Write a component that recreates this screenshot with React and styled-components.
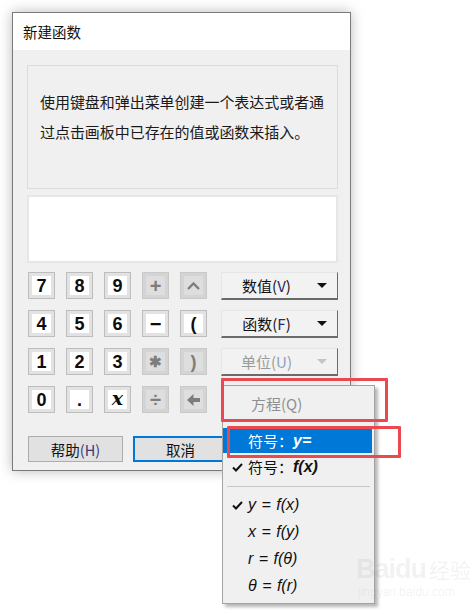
import React from "react";
import styled, { createGlobalStyle } from "styled-components";

const Global = createGlobalStyle`
  html, body {
    margin: 0;
    padding: 0;
    background: #ffffff;
  }
  body {
    font-family: "Noto Sans CJK SC", "Liberation Sans", sans-serif;
    color: #111;
  }
`;

const Page = styled.div`
  position: relative;
  width: 474px;
  height: 615px;
  box-sizing: border-box;
  padding: 12px 0 0 12px;
  overflow: hidden;
`;

const Window = styled.div`
  width: 339px;
  box-sizing: border-box;
  border: 1px solid #7a7a7a;
  box-shadow: 0 0 12px rgba(0, 0, 0, 0.28);
  background: #f0f0f0;
`;

const TitleBar = styled.div`
  height: 37px;
  background: #fff;
  display: flex;
  align-items: center;
  padding-left: 10px;
  font-size: 14.5px;
`;

const Body = styled.div`
  padding: 15px 12px 8px 14px;
  display: flex;
  flex-direction: column;
`;

const InfoBox = styled.div`
  height: 124px;
  box-sizing: border-box;
  border: 1px solid #dcdcdc;
  padding: 21px 8px 0 12px;
  font-size: 15px;
  line-height: 30px;
  letter-spacing: -0.05px;
  color: #1a1a1a;
`;

const InputBox = styled.div`
  margin-top: 6px;
  height: 68px;
  box-sizing: border-box;
  border: 2px solid #e6e6e6;
  background: #fff;
`;

const PadRow = styled.div`
  margin-top: 9px;
  display: flex;
  padding-left: 1px;
`;

const KeyGrid = styled.div`
  display: grid;
  grid-template-columns: repeat(5, 27px);
  grid-auto-rows: 27px;
  column-gap: 11px;
  row-gap: 11px;
`;

const Key = styled.div`
  box-sizing: border-box;
  border: 1px solid ${(p) => (p.$off ? "#c9c9c9" : "#bdbdbd")};
  background: ${(p) => (p.$off ? "#d4d4d4" : "#e2e2e2")};
  padding: 3px;
  display: flex;
`;

const KeyFace = styled.div`
  flex: 1;
  background: ${(p) => (p.$off ? "#dedede" : "#ffffff")};
  color: ${(p) => (p.$off ? "#7d7d7d" : "#0d0d0d")};
  display: flex;
  align-items: center;
  justify-content: center;
  font-family: "Liberation Sans", Arial, sans-serif;
  font-weight: bold;
  font-size: ${(p) => p.$size || 18}px;
  line-height: 1;
`;

const ScriptX = styled.span`
  font-family: "DejaVu Serif", "Liberation Serif", serif;
  font-style: italic;
  font-size: 19px;
  font-weight: bold;
  margin-top: -3px;
`;

const DropCol = styled.div`
  margin-left: 14px;
  display: flex;
  flex-direction: column;
  gap: 10px;
`;

const DropButton = styled.div`
  width: 117px;
  height: 28px;
  box-sizing: border-box;
  border-top: 1px solid #e6e6e6;
  border-left: 1px solid #e6e6e6;
  border-right: 1px solid #6a6a6a;
  border-bottom: 2px solid #6a6a6a;
  background: #f2f2f2;
  display: flex;
  align-items: center;
  font-size: 15px;
  color: ${(p) => (p.$off ? "#9a9a9a" : "#111")};
`;

const DropLabel = styled.span`
  flex: 1;
  padding-right: 6px;
  text-align: center;
  u {
    text-decoration: none;
    color: ${(p) => (p.$off ? "#8aa0c0" : "#2a2a6a")};
  }
`;

const Caret = styled.span`
  width: 0;
  height: 0;
  margin-right: 10px;
  border-left: 5px solid transparent;
  border-right: 5px solid transparent;
  border-top: 5px solid ${(p) => (p.$off ? "#c4c4c4" : "#111")};
`;

const Footer = styled.div`
  margin-top: 23px;
  display: flex;
  gap: 10px;
  padding-left: 1px;
`;

const FootButton = styled.div`
  width: 95px;
  height: 26px;
  box-sizing: border-box;
  background: #e1e1e1;
  border: ${(p) => (p.$focus ? "2px solid #0078d7" : "1px solid #adadad")};
  display: flex;
  align-items: center;
  justify-content: center;
  font-size: 14.5px;
  span {
    color: #3a3a7a;
  }
`;

const Menu = styled.div`
  position: absolute;
  left: 222px;
  top: 385px;
  width: 153px;
  height: 219px;
  box-sizing: border-box;
  background: #f0f0f0;
  border: 1px solid #a3a3a3;
  box-shadow: 3px 3px 3px rgba(0, 0, 0, 0.28);
  display: flex;
  flex-direction: column;
  font-size: 15px;
`;

const MenuItem = styled.div`
  height: ${(p) => p.$h || 26}px;
  margin-right: ${(p) => (p.$hot ? 2 : 1)}px;
  display: flex;
  align-items: center;
  padding-left: ${(p) => p.$indent || 25}px;
  position: relative;
  background: ${(p) => (p.$hot ? "#0078d7" : "transparent")};
  color: ${(p) => (p.$hot ? "#fff" : p.$off ? "#8f8f8f" : "#111")};
`;

const Check = styled.svg`
  position: absolute;
  left: 9px;
  top: 50%;
  margin-top: -4px;
`;

const Sep = styled.div`
  height: ${(p) => p.$h || 7}px;
  display: flex;
  align-items: center;
  padding: 0 4px;
  &::after {
    content: "";
    flex: 1;
    height: 1px;
    background: ${(p) => (p.$hide ? "transparent" : "#c6c6c6")};
  }
`;

const Math = styled.span`
  font-family: "Liberation Sans", Arial, sans-serif;
  font-style: italic;
  font-weight: ${(p) => (p.$bold ? "bold" : "normal")};
  font-size: 16px;
  word-spacing: 1px;
`;

const Mark = styled.div`
  position: absolute;
  left: ${(p) => p.$x}px;
  top: ${(p) => p.$y}px;
  width: ${(p) => p.$w}px;
  height: ${(p) => p.$h}px;
  box-sizing: border-box;
  border: 3px solid #e84a4f;
  border-radius: 1px;
  pointer-events: none;
`;

const Watermark = styled.div`
  position: absolute;
  left: 356px;
  top: 556px;
  color: rgba(120, 120, 120, 0.1);
  font-family: "Liberation Sans", Arial, sans-serif;
  line-height: 1;
  b {
    font-size: 27px;
    font-weight: bold;
    letter-spacing: -1px;
  }
  i {
    font-style: normal;
    font-size: 21px;
    font-family: "Noto Sans CJK SC", sans-serif;
    margin-left: 3px;
  }
  div {
    font-size: 12px;
    margin-top: 3px;
    margin-left: 2px;
  }
`;

const Arrow = () => (
  <svg width="13" height="12" viewBox="0 0 13 12">
    <path d="M0 6 L6.5 0 L6.5 4 L13 4 L13 8 L6.5 8 L6.5 12 Z" fill="#7d7d7d" />
  </svg>
);

const Chevron = () => (
  <svg width="13" height="8" viewBox="0 0 13 8">
    <path d="M1 7 L6.5 1.5 L12 7" fill="none" stroke="#7d7d7d" strokeWidth="2.4" />
  </svg>
);

const Tick = () => (
  <Check width="11" height="9" viewBox="0 0 11 9">
    <path d="M1 4.5 L4 7.5 L10 1" fill="none" stroke="#111" strokeWidth="2" />
  </Check>
);

const keys = [
  ["7"], ["8"], ["9"], ["+", true, 20], [<Chevron key="c" />, true],
  ["4"], ["5"], ["6"], ["−", false, 20], ["("],
  ["1"], ["2"], ["3"], ["✱", true, 15], [")", true],
  ["0"], ["."], [<ScriptX key="x">x</ScriptX>], ["÷", true, 20], [<Arrow key="a" />, true],
];

const drops = [
  ["数值", "V", false],
  ["函数", "F", false],
  ["单位", "U", true],
];

export default function App() {
  return (
    <>
      <Global />
      <Page>
        <Window>
          <TitleBar>新建函数</TitleBar>
          <Body>
            <InfoBox>
              使用键盘和弹出菜单创建一个表达式或者通
              <br />
              过点击画板中已存在的值或函数来插入。
            </InfoBox>
            <InputBox />
            <PadRow>
              <KeyGrid>
                {keys.map(([label, off, size], i) => (
                  <Key key={i} $off={off}>
                    <KeyFace $off={off} $size={size}>
                      {label}
                    </KeyFace>
                  </Key>
                ))}
              </KeyGrid>
              <DropCol>
                {drops.map(([name, acc, off]) => (
                  <DropButton key={name} $off={off}>
                    <DropLabel $off={off}>
                      {name}(<u>{acc}</u>)
                    </DropLabel>
                    <Caret $off={off} />
                  </DropButton>
                ))}
              </DropCol>
            </PadRow>
            <Footer>
              <FootButton>
                帮助<span>(H)</span>
              </FootButton>
              <FootButton $focus>取消</FootButton>
            </Footer>
          </Body>
        </Window>

        <Menu>
          <MenuItem $off $h={34} $indent={28}>
            方程(Q)
          </MenuItem>
          <Sep $h={8} $hide />
          <MenuItem $hot $h={25}>
            符号：<Math $bold>y=</Math>
          </MenuItem>
          <MenuItem $h={27}>
            <Tick />
            符号：<Math $bold>f(x)</Math>
          </MenuItem>
          <Sep $h={12} />
          <MenuItem $h={26}>
            <Tick />
            <Math>y = f(x)</Math>
          </MenuItem>
          <MenuItem $h={27}>
            <Math>x = f(y)</Math>
          </MenuItem>
          <MenuItem $h={27}>
            <Math>r = f(θ)</Math>
          </MenuItem>
          <MenuItem $h={27}>
            <Math>θ = f(r)</Math>
          </MenuItem>
        </Menu>

        <Mark $x={221} $y={378} $w={167} $h={44} />
        <Mark $x={227} $y={426} $w={174} $h={32} />

        <Watermark>
          <b>Baidu</b>
          <i>经验</i>
          <div>jingyan.baidu.com</div>
        </Watermark>
      </Page>
    </>
  );
}
